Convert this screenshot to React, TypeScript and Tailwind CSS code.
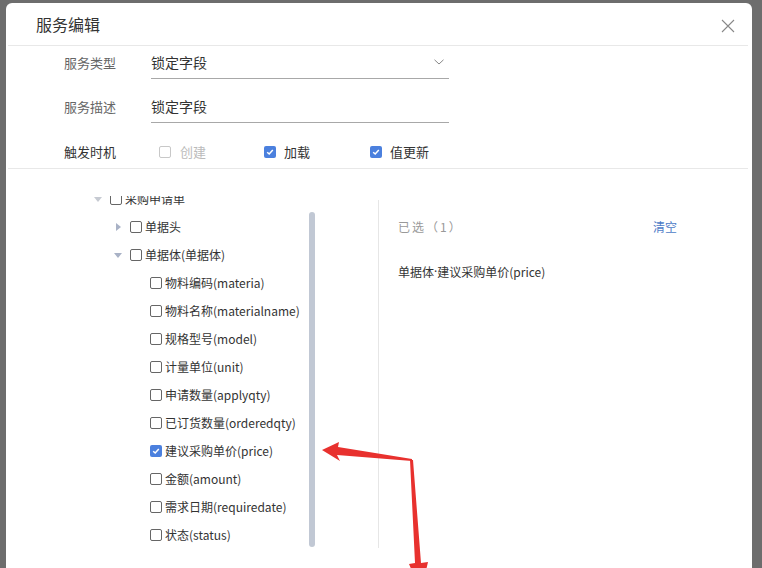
import React from "react";

const FONT = { fontFamily: '"Noto Sans CJK SC", "Noto Sans", sans-serif' };

function Box({ checked = false, disabled = false }: { checked?: boolean; disabled?: boolean }) {
  if (checked) {
    return (
      <span className="w-[12px] h-[12px] shrink-0 rounded-[2px] bg-[#4b80de] flex items-center justify-center">
        <svg width="8" height="8" viewBox="0 0 8 8">
          <path d="M1.2 4.2 L3.2 6 L6.8 2" fill="none" stroke="#fff" strokeWidth="1.5" />
        </svg>
      </span>
    );
  }
  return (
    <span
      className={`w-[12px] h-[12px] shrink-0 rounded-[2px] bg-white border ${disabled ? "border-[#c8c8c8]" : "border-[#666]"}`}
    />
  );
}

function Tri({ dir, light = false }: { dir: "down" | "right"; light?: boolean }) {
  const fill = light ? "#c6cad2" : "#a9b2c6";
  return (
    <span className="w-[16px] h-[28px] flex items-center shrink-0">
      <svg width="8" height="8" viewBox="0 0 8 8">
        {dir === "down" ? <polygon points="0,2 8,2 4,7" fill={fill} /> : <polygon points="2,0 7,4 2,8" fill={fill} />}
      </svg>
    </span>
  );
}

const fields = [
  "物料编码(materia)",
  "物料名称(materialname)",
  "规格型号(model)",
  "计量单位(unit)",
  "申请数量(applyqty)",
  "已订货数量(orderedqty)",
  "建议采购单价(price)",
  "金额(amount)",
  "需求日期(requiredate)",
  "状态(status)",
];

export default function App() {
  return (
    <div className="relative h-screen w-full overflow-hidden bg-[#6d6d6d] pl-[6px] pt-[3px] pr-[10px]" style={FONT}>
      <div className="h-[620px] bg-white rounded-t-[6px] flex flex-col">
        {/* header */}
        <div className="h-[42px] flex items-center justify-between pl-[30px] pr-[17px]">
          <span className="text-[16px] text-[#333] leading-none">服务编辑</span>
          <svg width="14" height="14" viewBox="0 0 14 14" className="mt-[4px]">
            <path d="M1 1 L13 13 M13 1 L1 13" stroke="#888" strokeWidth="1.1" />
          </svg>
        </div>
        <div className="h-px bg-[#e8e8e8] ml-[2px] mr-[4px]" />

        {/* form */}
        <div className="pl-[58px] pt-[1px] flex flex-col">
          <div className="h-[32px] flex items-center">
            <span className="w-[87px] text-[13px] text-[#666]">服务类型</span>
            <div className="w-[298px] h-full flex items-center justify-between border-b border-[#a8a8a8] pr-[5px]">
              <span className="text-[14px] text-[#333]">锁定字段</span>
              <svg width="10" height="6" viewBox="0 0 10 6" className="mb-[2px]">
                <path d="M0.5 0.8 L5 5 L9.5 0.8" fill="none" stroke="#888" strokeWidth="1" />
              </svg>
            </div>
          </div>
          <div className="h-[32px] mt-[12px] flex items-center">
            <span className="w-[87px] text-[13px] text-[#666]">服务描述</span>
            <div className="w-[298px] h-full flex items-center border-b border-[#a8a8a8]">
              <span className="text-[14px] text-[#333]">锁定字段</span>
            </div>
          </div>
          <div className="h-[32px] mt-[13px] flex items-center">
            <span className="w-[87px] text-[13px] text-[#333]">触发时机</span>
            <div className="flex items-center ml-[8px]">
              <div className="w-[105px] flex items-center gap-[9px]">
                <Box disabled />
                <span className="text-[13px] text-[#bbb]">创建</span>
              </div>
              <div className="w-[106px] flex items-center gap-[8px]">
                <Box checked />
                <span className="text-[13px] text-[#333]">加载</span>
              </div>
              <div className="flex items-center gap-[8px]">
                <Box checked />
                <span className="text-[13px] text-[#333]">值更新</span>
              </div>
            </div>
          </div>
        </div>
        <div className="h-px bg-[#e8e8e8] ml-[2px] mr-[4px]" />

        {/* body */}
        <div className="flex">
          <div className="w-[372px] shrink-0">
            <div className="relative mt-[27px] h-[352px] overflow-hidden">
              <div className="-mt-[11px] text-[12px] text-[#333]">
                <div className="h-[28px] flex items-center pl-[88px]">
                  <Tri dir="down" light />
                  <Box />
                  <span className="ml-[3px]">采购申请单</span>
                </div>
                <div className="h-[28px] flex items-center pl-[108px]">
                  <Tri dir="right" />
                  <Box />
                  <span className="ml-[3px]">单据头</span>
                </div>
                <div className="h-[28px] flex items-center pl-[108px]">
                  <Tri dir="down" />
                  <Box />
                  <span className="ml-[3px]">单据体(单据体)</span>
                </div>
                {fields.map((f) => (
                  <div key={f} className="h-[28px] flex items-center pl-[144px]">
                    <Box checked={f === "建议采购单价(price)"} />
                    <span className="ml-[3px]">{f}</span>
                  </div>
                ))}
              </div>
              {/* scrollbar thumb */}
              <div className="absolute left-[303px] top-[16px] w-[6px] h-[335px] rounded-full bg-[#c1c8d4]" />
            </div>
          </div>
          <div className="w-px h-[348px] mt-[31px] bg-[#e6e6e6]" />
          <div className="flex-1 pl-[19px] pr-[75px] pt-[48px] text-[12px]">
            <div className="h-[20px] flex items-center justify-between">
              <span className="text-[#999] tracking-[2px]">已选（1）</span>
              <span className="text-[#4d7cc7]">清空</span>
            </div>
            <div className="h-[20px] mt-[25px] flex items-center text-[#333]">
              单据体<span style={{ fontFamily: '"Noto Sans", sans-serif' }}>·</span>建议采购单价(price)
            </div>
          </div>
        </div>
      </div>

      {/* annotation arrows */}
      <svg className="absolute left-0 top-0 pointer-events-none" width="762" height="568" viewBox="0 0 762 568">
        <polygon points="322,450 339,442 338,447 412,459 412,461 337,455 340,461" fill="#e8312e" />
        <polygon points="410,460 413,460 421,563 428,562 421,592 409,564 415,563" fill="#e8312e" />
      </svg>
    </div>
  );
}
